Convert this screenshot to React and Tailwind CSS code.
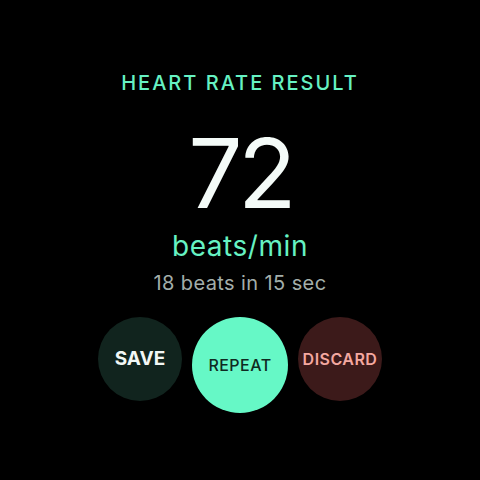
export default function App() {
  const font = { fontFamily: 'Inter, "Noto Sans", sans-serif' };

  return (
    <div className="w-[480px] h-[480px] bg-black flex flex-col items-center pt-[73px]" style={font}>
      <div className="text-[20px] leading-[21px] font-medium tracking-[0.1em] text-[#66f2c3]">
        HEART RATE RESULT
      </div>
      <div className="mt-[29px] text-[96px] leading-[100px] tracking-[-0.05em] text-[#f4fbf8]">72</div>
      <div className="mt-[9px] text-[28px] leading-[29px] tracking-[0.02em] text-[#66f2c3]">beats/min</div>
      <div className="mt-[12px] text-[20px] leading-[20px] tracking-[0.02em] text-[#a3aeaa]">18 beats in 15 sec</div>

      <div className="mt-[24px] flex items-start gap-[10px]">
        <button className="w-[84px] h-[84px] rounded-full bg-[#11241e] flex items-center justify-center text-[19px] font-bold text-[#f2f7f5]">
          SAVE
        </button>
        <button className="w-[96px] h-[96px] rounded-full bg-[#66f8c6] flex items-center justify-center text-[16px] font-medium tracking-[0.03em] text-[#0f2a21]">
          REPEAT
        </button>
        <button className="w-[84px] h-[84px] rounded-full bg-[#3c1a1a] flex items-center justify-center text-[16px] font-semibold tracking-[0.03em] text-[#f4a8a0]">
          DISCARD
        </button>
      </div>
    </div>
  );
}
